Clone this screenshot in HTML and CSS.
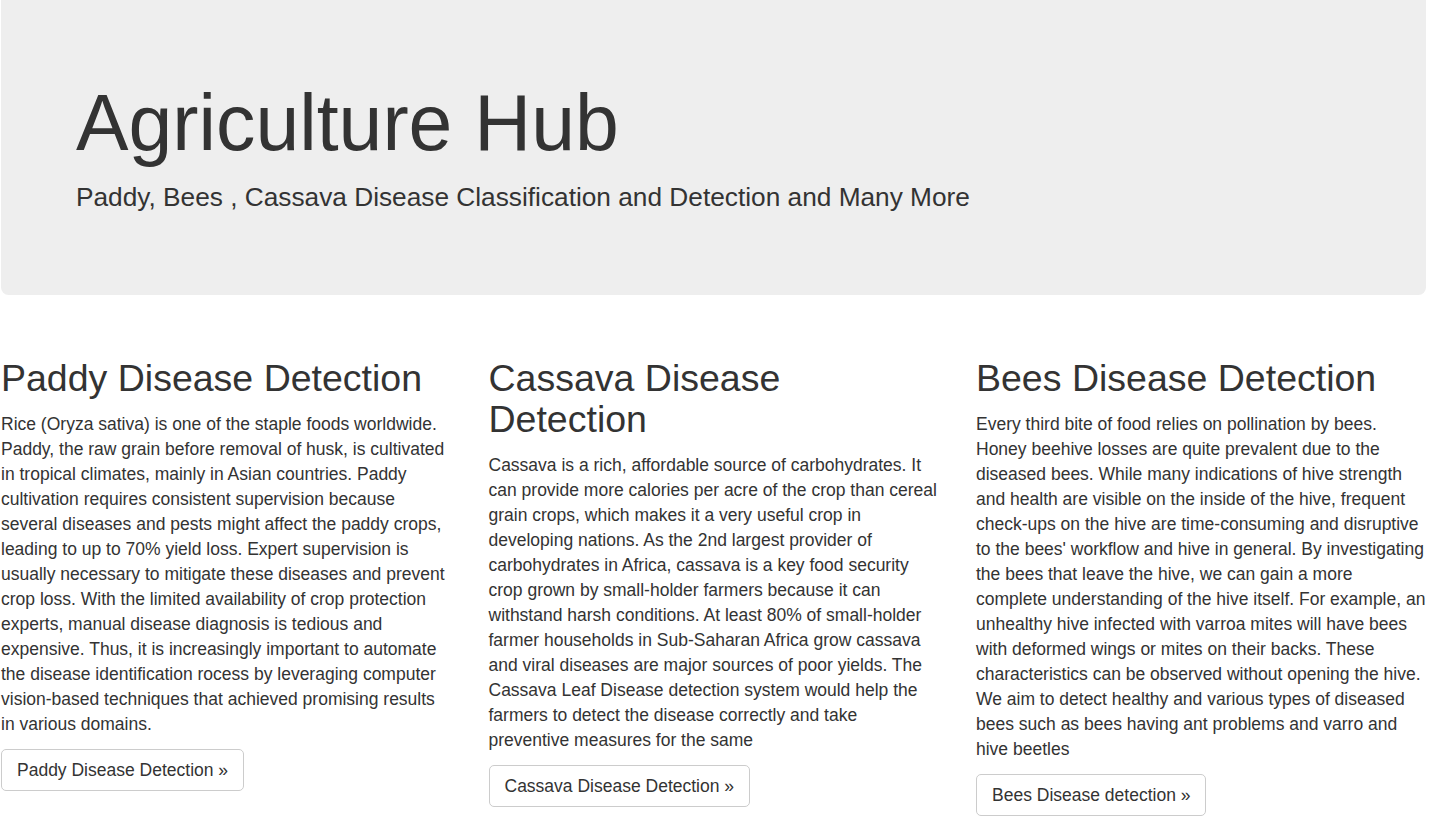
FILE: index.html
```html
<!DOCTYPE html>
<html lang="en">
<head>
<meta charset="utf-8">
<title>Agriculture Hub</title>
<link rel="stylesheet" href="styles.css">
</head>
<body>
<div class="container">
  <div class="jumbotron">
    <h1>Agriculture Hub</h1>
    <p>Paddy, Bees , Cassava Disease Classification and Detection and Many More</p>
  </div>
  <div class="row">
    <div class="col">
      <h2>Paddy Disease Detection</h2>
      <p>Rice (Oryza sativa) is one of the staple foods worldwide. Paddy, the raw grain before removal of husk, is cultivated in tropical climates, mainly in Asian countries. Paddy cultivation requires consistent supervision because several diseases and pests might affect the paddy crops, leading to up to 70% yield loss. Expert supervision is usually necessary to mitigate these diseases and prevent crop loss. With the limited availability of crop protection experts, manual disease diagnosis is tedious and expensive. Thus, it is increasingly important to automate the disease identification rocess by leveraging computer vision-based techniques that achieved promising results in various domains.</p>
      <p><a class="btn" href="#">Paddy Disease Detection &raquo;</a></p>
    </div>
    <div class="col">
      <h2>Cassava Disease Detection</h2>
      <p>Cassava is a rich, affordable source of carbohydrates. It can provide more calories per acre of the crop than cereal grain crops, which makes it a very useful crop in developing nations. As the 2nd largest provider of carbohydrates in Africa, cassava is a key food security crop grown by small-holder farmers because it can withstand harsh conditions. At least 80% of small-holder farmer households in Sub-Saharan Africa grow cassava and viral diseases are major sources of poor yields. The Cassava Leaf Disease detection system would help the farmers to detect the disease correctly and take preventive measures for the same</p>
      <p><a class="btn" href="#">Cassava Disease Detection &raquo;</a></p>
    </div>
    <div class="col">
      <h2>Bees Disease Detection</h2>
      <p>Every third bite of food relies on pollination by bees. Honey beehive losses are quite prevalent due to the diseased bees. While many indications of hive strength and health are visible on the inside of the hive, frequent check-ups on the hive are time-consuming and disruptive to the bees' workflow and hive in general. By investigating the bees that leave the hive, we can gain a more complete understanding of the hive itself. For example, an unhealthy hive infected with varroa mites will have bees with deformed wings or mites on their backs. These characteristics can be observed without opening the hive. We aim to detect healthy and various types of diseased bees such as bees having ant problems and varro and hive beetles</p>
      <p><a class="btn" href="#">Bees Disease detection &raquo;</a></p>
    </div>
  </div>
</div>
</body>
</html>
```
FILE: styles.css
```css
* { box-sizing: border-box; }
html, body { margin: 0; padding: 0; }
body {
  font-family: "Liberation Sans", Arial, Helvetica, sans-serif;
  font-size: 17.5px;
  line-height: 25px;
  color: #333;
  background: #fff;
}
.container {
  margin-left: 1px;
  width: 1425px;
}
.jumbotron {
  background: #eee;
  border-radius: 0 0 7.5px 7.5px;
  padding: 55px 75px 60px;
  margin-bottom: 37.5px;
}
.jumbotron h1 {
  font-size: 78.75px;
  line-height: 1.1;
  font-weight: 500;
  margin: 25px 0 12.5px;
}
.jumbotron p {
  font-size: 26.25px;
  line-height: 37.5px;
  font-weight: 200;
  margin: 0 0 18.75px;
}
.row {
  display: grid;
  grid-template-columns: 450px 450px 450px;
  column-gap: 37.5px;
}
.col h2 {
  font-size: 37.5px;
  line-height: 1.1;
  font-weight: 500;
  margin: 25px 0 12.5px;
}
.col p {
  margin: 0 0 12.5px;
}
.btn {
  display: inline-block;
  padding: 7.5px 15px;
  font-size: 17.5px;
  line-height: 25px;
  color: #333;
  background: #fff;
  border: 1px solid #ccc;
  border-radius: 5px;
  text-decoration: none;
}
```
